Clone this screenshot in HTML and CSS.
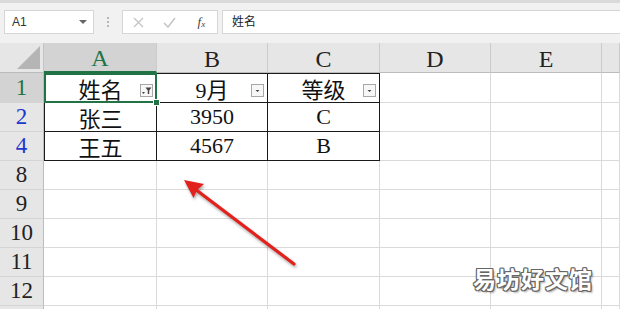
FILE: index.html
```html
<!DOCTYPE html>
<html>

<head>
    <title>Sheet - filter</title>
    <meta charset="utf-8">
    <link rel="stylesheet" href="styles.css">
</head>

<body>
    <div class="app">
        <!-- name box + formula bar -->
        <div class="formula-row">
            <div class="namebox">
                <span>A1</span>
                <svg class="caret" width="8" height="5" viewBox="0 0 8 5"><polygon points="0,0 8,0 4,4" fill="#666"/></svg>
            </div>
            <div class="grip">
                <i></i><i></i><i></i>
            </div>
            <div class="fx-buttons">
                <span class="fx-btn">
                    <svg width="11" height="11" viewBox="0 0 11 11"><path d="M1 1 L10 10 M10 1 L1 10" stroke="#c4c4c4" stroke-width="1.3"/></svg>
                </span>
                <span class="fx-btn">
                    <svg width="13" height="11" viewBox="0 0 13 11"><path d="M1 6 L5 10 L12 1" stroke="#c4c4c4" stroke-width="1.5" fill="none"/></svg>
                </span>
                <span class="fx-btn fx-label"><em>f</em><small>x</small></span>
            </div>
            <div class="formula-input">姓名</div>
        </div>

        <!-- worksheet grid -->
        <div class="sheet">
            <div class="corner"><div class="tri"></div></div>
            <div class="col-head active">A</div>
            <div class="col-head">B</div>
            <div class="col-head">C</div>
            <div class="col-head">D</div>
            <div class="col-head">E</div>
            <div class="col-head"></div>

            <div class="row-head active">1</div>
            <div class="cell t top first selected">姓名
                <span class="filter">
                    <svg width="11" height="11" viewBox="0 0 11 11"><polygon points="1,7 4,7 2.5,9" fill="#444"/><polygon points="4.5,2.5 10.5,2.5 8.2,5.5 8.2,9 6.8,9 6.8,5.5" fill="#444"/></svg>
                </span>
            </div>
            <div class="cell t top">9月
                <span class="filter"><svg width="11" height="11" viewBox="0 0 11 11"><polygon points="3.5,5 7.5,5 5.5,7" fill="#444"/></svg></span>
            </div>
            <div class="cell t top">等级
                <span class="filter"><svg width="11" height="11" viewBox="0 0 11 11"><polygon points="3.5,5 7.5,5 5.5,7" fill="#444"/></svg></span>
            </div>
            <div class="cell"></div>
            <div class="cell"></div>
            <div class="cell"></div>

            <div class="row-head filtered">2</div>
            <div class="cell t first">张三</div>
            <div class="cell t">3950</div>
            <div class="cell t">C</div>
            <div class="cell"></div>
            <div class="cell"></div>
            <div class="cell"></div>

            <div class="row-head filtered">4</div>
            <div class="cell t first">王五</div>
            <div class="cell t">4567</div>
            <div class="cell t">B</div>
            <div class="cell"></div>
            <div class="cell"></div>
            <div class="cell"></div>

            <div class="row-head">8</div>
            <div class="cell"></div><div class="cell"></div><div class="cell"></div><div class="cell"></div><div class="cell"></div><div class="cell"></div>
            <div class="row-head">9</div>
            <div class="cell"></div><div class="cell"></div><div class="cell"></div><div class="cell"></div><div class="cell"></div><div class="cell"></div>
            <div class="row-head">10</div>
            <div class="cell"></div><div class="cell"></div><div class="cell"></div><div class="cell"></div><div class="cell"></div><div class="cell"></div>
            <div class="row-head">11</div>
            <div class="cell"></div><div class="cell"></div><div class="cell"></div><div class="cell"></div><div class="cell"></div><div class="cell"></div>
            <div class="row-head">12</div>
            <div class="cell"></div><div class="cell"></div><div class="cell"></div><div class="cell"></div><div class="cell"></div><div class="cell"></div>
            <div class="row-head"></div>
            <div class="cell"></div><div class="cell"></div><div class="cell"></div><div class="cell"></div><div class="cell"></div><div class="cell"></div>
        </div>

        <!-- annotation arrow -->
        <svg class="arrow" width="620" height="309" viewBox="0 0 620 309">
            <line x1="294" y1="264" x2="195" y2="189" stroke="#e3211c" stroke-width="3.2" stroke-linecap="round"/>
            <polygon points="184,180 204,184 197,190 193.5,198" fill="#e3211c"/>
        </svg>

        <div class="watermark">易坊好文馆</div>
    </div>
</body>

</html>
```

FILE: styles.css
```css
html,
body {
    margin: 0;
    height: 100%;
    overflow: hidden;
    background: #fff;
    font-family: "Liberation Sans", "Noto Sans CJK SC", sans-serif;
}

.app {
    position: relative;
    width: 620px;
    height: 309px;
    overflow: hidden;
}

/* ---------- formula bar ---------- */

.formula-row {
    display: flex;
    align-items: center;
    height: 43px;
    box-sizing: border-box;
    padding: 7px 0 9px 4px;
    border-top: 3px solid #dadada;
    background: #f1f1f1;
}

.namebox {
    width: 90px;
    height: 24px;
    box-sizing: border-box;
    border: 1px solid #d6d6d6;
    background: #fff;
    display: flex;
    align-items: center;
    justify-content: space-between;
    padding: 0 6px 0 7px;
    font-size: 12px;
    color: #333;
}

.namebox .caret {
    margin-top: 1px;
}

.grip {
    width: 28px;
    display: flex;
    flex-direction: column;
    align-items: center;
    gap: 2px;
}

.grip i {
    width: 2px;
    height: 2px;
    background: #b8b8b8;
}

.fx-buttons {
    width: 96px;
    height: 24px;
    box-sizing: border-box;
    border: 1px solid #d6d6d6;
    background: #fff;
    display: flex;
}

.fx-btn {
    width: 32px;
    display: flex;
    align-items: center;
    justify-content: center;
}

.fx-label {
    font-family: "Liberation Serif", serif;
    color: #444;
    font-size: 13px;
}

.fx-label small {
    font-size: 9px;
    font-style: italic;
    margin-top: 4px;
}

.formula-input {
    flex: 1;
    margin-left: 4px;
    height: 24px;
    box-sizing: border-box;
    border: 1px solid #d6d6d6;
    border-right: none;
    background: #fff;
    padding-left: 9px;
    font-size: 12px;
    line-height: 22px;
    color: #222;
}

/* ---------- worksheet ---------- */

.sheet {
    display: grid;
    grid-template-columns: 44px 113px 111px 112px 111px 111px 18px;
    grid-template-rows: 30px 30px repeat(8, 29px);
    font-family: "Liberation Serif", "Noto Sans CJK SC", serif;
    font-size: 22px;
    color: #111;
}

.sheet > div {
    box-sizing: border-box;
    display: flex;
    align-items: center;
    justify-content: center;
}

.corner {
    background: #e6e6e6;
    border-right: 1px solid #c4c4c4;
    border-bottom: 1px solid #bcbcbc;
    align-items: flex-end !important;
    justify-content: flex-end !important;
    padding: 0 3px 3px 0;
}

.corner .tri {
    width: 23px;
    height: 23px;
    background: #b5b5b5;
    clip-path: polygon(100% 0, 100% 100%, 0 100%);
}

.col-head {
    background: #e6e6e6;
    border-right: 1px solid #cbcbcb;
    border-bottom: 1px solid #bcbcbc;
    color: #222;
    font-size: 24px;
    padding-top: 3px;
}

.col-head.active {
    background: #d3d3d3;
    color: #217346;
    border-bottom: 2px solid #217346;
}

.row-head {
    background: #e6e6e6;
    border-right: 1px solid #bcbcbc;
    border-bottom: 1px solid #d4d4d4;
    color: #222;
    font-size: 23px;
}

.row-head.active {
    background: #d3d3d3;
    color: #217346;
}

.row-head.filtered {
    color: #2236d0;
}

.cell {
    position: relative;
    background: #fff;
    border-right: 1px solid #dadada;
    border-bottom: 1px solid #dadada;
}

.cell.t {
    border-right-color: #1a1a1a;
    border-bottom-color: #1a1a1a;
}

.cell.top {
    border-top: 1px solid #1a1a1a;
}

.cell.first {
    border-left: 1px solid #1a1a1a;
}

.cell.selected {
    outline: 2px solid #217346;
    outline-offset: -2px;
    z-index: 1;
}

.cell.selected::after {
    content: "";
    position: absolute;
    right: -4px;
    bottom: -4px;
    width: 5px;
    height: 5px;
    background: #217346;
    border: 1px solid #fff;
}

.filter {
    position: absolute;
    right: 3px;
    bottom: 5px;
    width: 13px;
    height: 13px;
    box-sizing: border-box;
    border: 1px solid #a8a8a8;
    background: #f7f7f7;
    display: flex;
    align-items: center;
    justify-content: center;
}

/* ---------- overlays ---------- */

.arrow {
    position: absolute;
    left: 0;
    top: 0;
    pointer-events: none;
    filter: drop-shadow(1px 2px 1.5px rgba(0, 0, 0, 0.35));
}

.watermark {
    position: absolute;
    left: 473px;
    top: 261px;
    font-family: "Noto Sans CJK SC", sans-serif;
    font-size: 23px;
    font-weight: bold;
    letter-spacing: 1px;
    color: #fff;
    text-shadow:
        1px 0 #666, -1px 0 #666, 0 1px #666, 0 -1px #666,
        1px 1px #666, -1px -1px #666, 1px -1px #666, -1px 1px #666,
        2px 2px 2px rgba(0, 0, 0, 0.35);
}
```
